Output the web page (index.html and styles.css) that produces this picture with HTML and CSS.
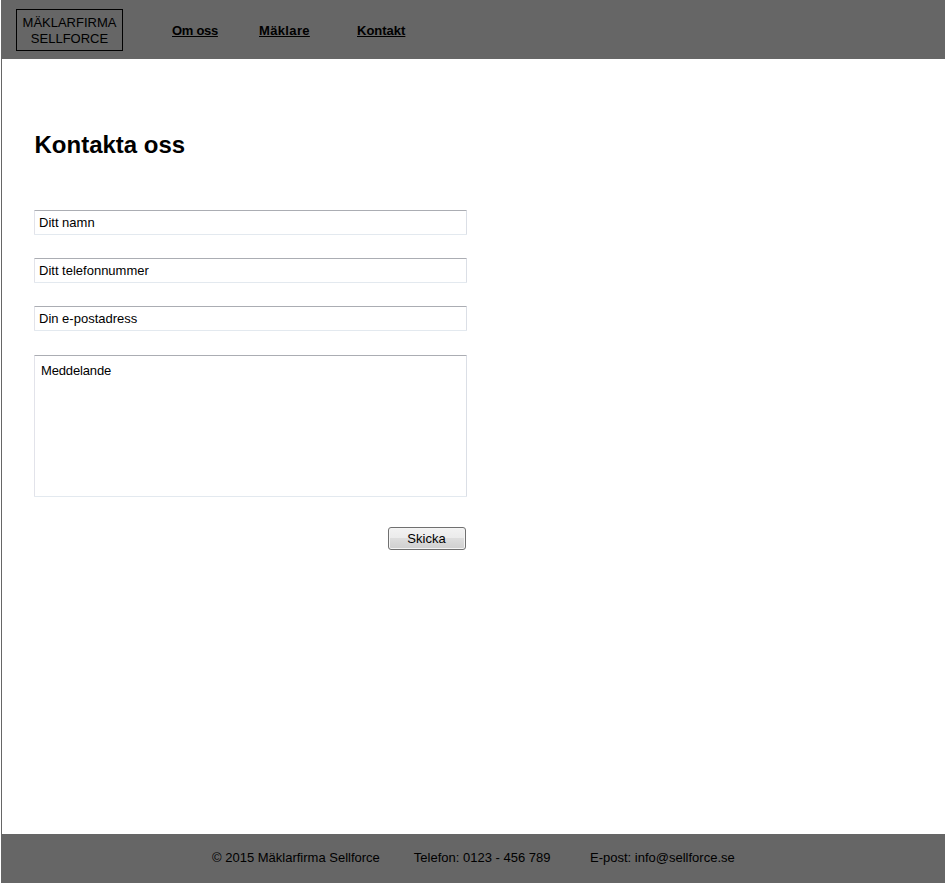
FILE: index.html
```html
<!DOCTYPE html>
<html lang="sv">
<head>
<meta charset="utf-8">
<title>Kontakta oss</title>
<link rel="stylesheet" href="styles.css">
</head>
<body>
<div class="page">
  <header class="header">
    <div class="logo">MÄKLARFIRMA<br>SELLFORCE</div>
    <nav class="nav">
      <a class="about" href="#">Om oss</a>
      <a class="agents" href="#">Mäklare</a>
      <a href="#">Kontakt</a>
    </nav>
  </header>
  <main class="main">
    <h1>Kontakta oss</h1>
    <form class="form">
      <input class="field" type="text" value="Ditt namn">
      <input class="field" type="text" value="Ditt telefonnummer">
      <input class="field" type="text" value="Din e-postadress">
      <textarea class="field message">Meddelande</textarea>
      <button class="send" type="button">Skicka</button>
    </form>
  </main>
  <footer class="footer">
    <span class="copyright">© 2015 Mäklarfirma Sellforce</span>
    <span class="phone">Telefon: 0123 - 456 789</span>
    <span>E-post: info@sellforce.se</span>
  </footer>
</div>
</body>
</html>
```
FILE: styles.css
```css
* { box-sizing: border-box; }
body {
  margin: 0;
  background: #fff;
  color: #000;
  font: 13px/16px "Liberation Sans", Arial, sans-serif;
}
.page {
  display: flex;
  flex-direction: column;
  height: 883px;
  margin-left: 1px;
  border-left: 1px solid #666;
}
.header {
  display: flex;
  height: 59px;
  background: #666;
}
.logo {
  width: 107px;
  height: 42px;
  margin: 9px 0 0 14px;
  padding-top: 5px;
  border: 1px solid #000;
  text-align: center;
}
.nav {
  display: grid;
  grid-template-columns: 87px 98px auto;
  justify-items: start;
  margin: 23px 0 0 49px;
}
.nav a {
  color: #000;
  font-weight: bold;
}
.nav .about { letter-spacing: -0.3px; }
.nav .agents { letter-spacing: 0.35px; }
.main {
  flex: 1;
  padding: 72px 32px 0;
}
h1 {
  margin: 0;
  padding-left: 0.5px;
  font-size: 24px;
  line-height: 28px;
}
.form {
  display: flex;
  flex-direction: column;
  width: 433px;
  margin-top: 51px;
}
.field {
  width: 100%;
  height: 25px;
  margin: 0 0 23px;
  padding: 0 4px;
  border: 1px solid;
  border-color: #abadb3 #dbdfe6 #e3e9ef #e2e3ea;
  border-radius: 1px;
  background: #fff;
  color: #000;
  font: inherit;
}
.message {
  height: 142px;
  margin: 1px 0 30px;
  padding: 7px 6px;
  letter-spacing: -0.15px;
  resize: none;
}
.send {
  align-self: flex-end;
  width: 78px;
  height: 23px;
  margin-right: 1px;
  padding: 0 1px 0 0;
  border: 1px solid #707070;
  border-radius: 3px;
  background: linear-gradient(#f2f2f2 0, #ebebeb 50%, #ddd 50%, #cfcfcf 100%);
  box-shadow: inset 0 0 0 1px #f4f4f4;
  color: #000;
  font: inherit;
}
.footer {
  display: flex;
  height: 49px;
  padding: 16px 0 0 210px;
  background: #666;
}
.copyright { margin-right: 34px; }
.phone { margin-right: 39.6px; }
```
